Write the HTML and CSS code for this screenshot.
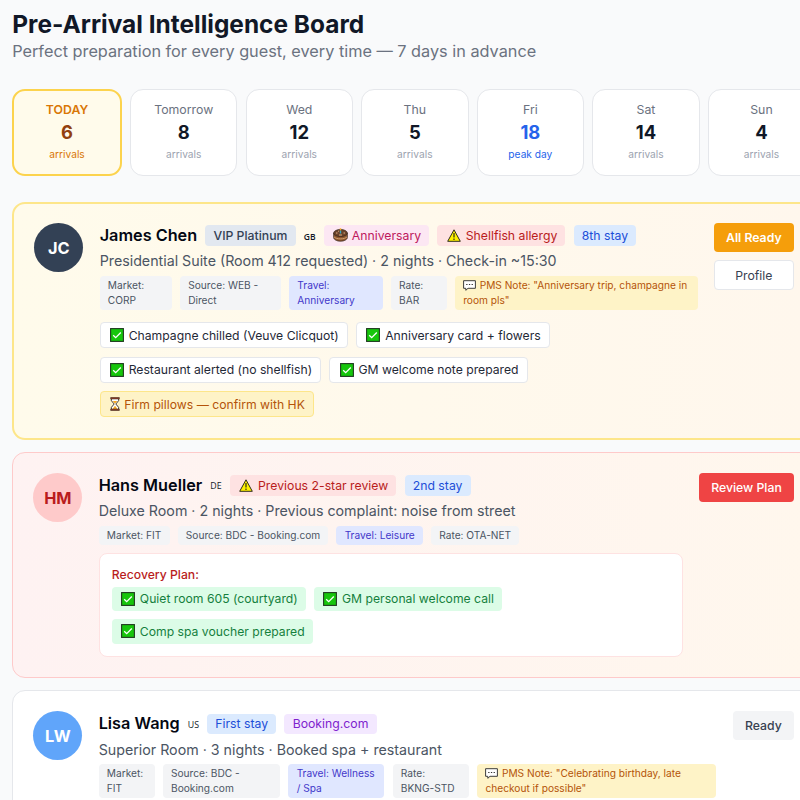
FILE: index.html
```html
<!DOCTYPE html>
<html lang="en">
<head>
<meta charset="utf-8">
<title>Pre-Arrival Intelligence Board</title>
<link rel="stylesheet" href="styles.css">
</head>
<body>
<svg class="defs" width="0" height="0">
  <symbol id="check" viewBox="0 0 14 14"><rect x=".6" y=".6" width="12.8" height="12.8" fill="#16c60c" stroke="#203a20" stroke-width="1.1"/><path d="M3.2 7.2l2.5 2.5 5.1-5.2" fill="none" stroke="#fff" stroke-width="1.3"/></symbol>
  <symbol id="warn" viewBox="0 0 14 13"><path d="M7 .8L13.3 12.3H.7z" fill="#fff100" stroke="#302d1c" stroke-width="1" stroke-linejoin="round"/><path d="M7 4v4.6M7 9.6v1.3" stroke="#302d1c" stroke-width="1.2"/></symbol>
  <symbol id="cake" viewBox="0 0 15 14"><path d="M.7 5v4.5c0 2 3 3.7 6.8 3.7s6.8-1.7 6.8-3.7V5z" fill="#8e562e" stroke="#3b2a20" stroke-width=".8"/><path d="M1 8.8c2 2.8 11 2.8 13 0" fill="none" stroke="#d7a878" stroke-width=".9"/><ellipse cx="7.5" cy="5" rx="6.8" ry="3.5" fill="#6c442c" stroke="#3b2a20" stroke-width=".8"/><path d="M3 5h1.5M10.5 5H12M6 7h3M5 3.2h1" stroke="#e9b98e" stroke-width=".9"/><path d="M7.5 2.5v3" stroke="#31a8c8" stroke-width="1.3"/><path d="M7.5.3v2" stroke="#f7a823" stroke-width="1.5"/></symbol>
  <symbol id="hour" viewBox="0 0 10 14"><path d="M1.4 1.5v2.2L4.2 7l-2.8 3.3v2.2h7.2v-2.2L5.8 7l2.8-3.3V1.5z" fill="#fff" stroke="#33251f" stroke-width=".9"/><path d="M2.7 4h4.6L5 6.8zM5 8.7l2.5 3.3h-5z" fill="#f7a823"/><path d="M.4 1.2h9.2M.4 12.8h9.2" stroke="#33251f" stroke-width="2"/><path d="M.8 1.2h8.4M.8 12.8h8.4" stroke="#b5482b" stroke-width=".8"/></symbol>
  <symbol id="bubble" viewBox="0 0 13 11"><path d="M.6.7h11.8v7.6H5L2.8 10.3v-2H.6z" fill="#fff" stroke="#333" stroke-width=".95"/><path d="M3.2 4.5h1.3M5.9 4.5h1.3M8.6 4.5h1.3" stroke="#333" stroke-width="1.2"/></symbol>
</svg>
<main class="board">
  <header>
    <h1>Pre-Arrival Intelligence Board</h1>
    <p class="subtitle">Perfect preparation for every guest, every time — 7 days in advance</p>
  </header>

  <section class="days">
    <div class="day today"><span class="label">TODAY</span><span class="count">6</span><span class="note">arrivals</span></div>
    <div class="day"><span class="label">Tomorrow</span><span class="count">8</span><span class="note">arrivals</span></div>
    <div class="day"><span class="label">Wed</span><span class="count">12</span><span class="note">arrivals</span></div>
    <div class="day"><span class="label">Thu</span><span class="count">5</span><span class="note">arrivals</span></div>
    <div class="day peak"><span class="label">Fri</span><span class="count">18</span><span class="note">peak day</span></div>
    <div class="day"><span class="label">Sat</span><span class="count">14</span><span class="note">arrivals</span></div>
    <div class="day"><span class="label">Sun</span><span class="count">4</span><span class="note">arrivals</span></div>
  </section>

  <section class="guests">
    <article class="guest vip">
      <div class="avatar">JC</div>
      <div class="info">
        <div class="head"><h2>James Chen</h2><span class="badge slate">VIP Platinum</span><span class="flag bold">GB</span><span class="badge pink"><svg class="i-cake"><use href="#cake"/></svg>Anniversary</span><span class="badge red"><svg class="i-warn"><use href="#warn"/></svg>Shellfish allergy</span><span class="badge blue">8th stay</span></div>
        <p class="stay">Presidential Suite (Room 412 requested) · 2 nights · Check-in ~15:30</p>
        <div class="tags cols-james"><span class="tag">Market: CORP</span><span class="tag">Source: WEB - Direct</span><span class="tag travel">Travel: Anniversary</span><span class="tag">Rate: BAR</span><span class="tag pms"><svg class="i-bubble"><use href="#bubble"/></svg>PMS Note: "Anniversary trip, champagne in room pls"</span></div>
        <div class="tasks">
          <span class="task"><svg class="i-check"><use href="#check"/></svg>Champagne chilled (Veuve Clicquot)</span>
          <span class="task"><svg class="i-check"><use href="#check"/></svg>Anniversary card + flowers</span>
          <span class="task"><svg class="i-check"><use href="#check"/></svg>Restaurant alerted (no shellfish)</span>
          <span class="task"><svg class="i-check"><use href="#check"/></svg>GM welcome note prepared</span>
          <span class="task pending"><svg class="i-hour"><use href="#hour"/></svg>Firm pillows — confirm with HK</span>
        </div>
      </div>
      <div class="actions"><button class="btn amber">All Ready</button><button class="btn outline">Profile</button></div>
    </article>

    <article class="guest risk">
      <div class="avatar">HM</div>
      <div class="info">
        <div class="head"><h2>Hans Mueller</h2><span class="flag">DE</span><span class="badge red"><svg class="i-warn"><use href="#warn"/></svg>Previous 2-star review</span><span class="badge blue">2nd stay</span></div>
        <p class="stay">Deluxe Room · 2 nights · Previous complaint: noise from street</p>
        <div class="tags"><span class="tag">Market: FIT</span><span class="tag">Source: BDC - Booking.com</span><span class="tag travel">Travel: Leisure</span><span class="tag">Rate: OTA-NET</span></div>
        <div class="plan">
          <h3>Recovery Plan:</h3>
          <div class="steps">
            <span class="step"><svg class="i-check"><use href="#check"/></svg>Quiet room 605 (courtyard)</span>
            <span class="step"><svg class="i-check"><use href="#check"/></svg>GM personal welcome call</span>
            <span class="step"><svg class="i-check"><use href="#check"/></svg>Comp spa voucher prepared</span>
          </div>
        </div>
      </div>
      <div class="actions"><button class="btn danger">Review Plan</button></div>
    </article>

    <article class="guest last">
      <div class="avatar">LW</div>
      <div class="info">
        <div class="head"><h2>Lisa Wang</h2><span class="flag">US</span><span class="badge blue">First stay</span><span class="badge purple">Booking.com</span></div>
        <p class="stay">Superior Room · 3 nights · Booked spa + restaurant</p>
        <div class="tags cols-lisa"><span class="tag">Market: FIT</span><span class="tag">Source: BDC - Booking.com</span><span class="tag travel">Travel: Wellness / Spa</span><span class="tag rate">Rate: <span>BKNG-STD</span></span><span class="tag pms"><svg class="i-bubble"><use href="#bubble"/></svg>PMS Note: "Celebrating birthday, late checkout if possible"</span></div>
      </div>
      <div class="actions"><button class="btn plain">Ready</button></div>
    </article>
  </section>
</main>
</body>
</html>
```
FILE: styles.css
```css
* { box-sizing: border-box; }
html, body { height: 800px; overflow: hidden; }
body { margin: 0; background: #f9fafb; color: #030712; font-family: Inter, "Liberation Sans", sans-serif; }
h1, h2, h3, p { margin: 0; }
.defs { display: block; }
.board { width: 827.4px; height: 800px; overflow: hidden; padding: 10px 12.2px 0; }

h1 { font-size: 24.45px; line-height: 29.4px; font-weight: 700; color: #111827; white-space: nowrap; }
.subtitle { font-size: 16.27px; line-height: 25.6px; color: #6b7280; white-space: nowrap; }

.days { display: grid; grid-template-columns: 109.7px repeat(6, 107.4px); gap: 8.17px; margin-top: 23.8px; }
.day { height: 87.6px; padding-top: 10px; display: flex; flex-direction: column; align-items: center; background: #fff; border: 1px solid #e5e7eb; border-radius: 13px; }
.label { font-size: 12.3px; line-height: 19px; color: #6b7280; }
.count { font-size: 18.4px; line-height: 26px; font-weight: 700; color: #111827; }
.note { font-size: 10.2px; line-height: 18px; color: #9ca3af; }
.today { padding-top: 9.4px; background: #fffbeb; border: 2px solid #fcd34d; }
.today .label { color: #d97706; font-weight: 600; }
.today .count { color: #92400e; }
.today .note { color: #d97706; }
.peak .count, .peak .note { color: #2563eb; }

.guests { display: flex; flex-direction: column; gap: 12.3px; margin-top: 25.4px; }
.guest { flex: none; display: flex; align-items: flex-start; gap: 16.3px; padding: 20.2px; background: #fff; border: 1px solid #e5e7eb; border-radius: 13px; height: 226px; }
.vip { height: 237.9px; padding: 19.4px 19.6px 19.4px 20.2px; border: 2px solid #fde68a; background: linear-gradient(90deg, #fffbeb, #fff7ed); }
.risk { border-color: #fecaca; background: linear-gradient(90deg, #fef2f2, #fff7ed); }
.last { height: 130px; }
.avatar { flex: none; width: 49px; height: 49px; border-radius: 50%; display: flex; align-items: center; justify-content: center; font-size: 16.33px; font-weight: 700; color: #fff; background: #60a5fa; }
.vip .avatar { background: #334155; }
.risk .avatar { background: #fecaca; color: #b91c1c; }
.info { flex: 1; min-width: 0; }

.head { display: flex; align-items: center; gap: 8.17px; height: 24.5px; white-space: nowrap; }
h2 { font-size: 16.25px; line-height: 24.5px; font-weight: 600; color: #030712; }
.badge { display: flex; align-items: center; height: 20.4px; padding: 0 8.17px; border-radius: 4px; font-size: 12.25px; }
.slate { background: #e2e8f0; color: #334155; font-weight: 500; }
.pink { background: #fce7f3; color: #be185d; }
.red { background: #fee2e2; color: #b91c1c; }
.blue { background: #dbeafe; color: #1d4ed8; }
.purple { background: #f3e8ff; color: #7e22ce; }
.flag { font-family: "Open Sans", "Noto Sans", sans-serif; font-size: 8.8px; font-weight: 500; color: #111827; padding-top: 2px; }
.flag.bold { font-size: 8.5px; font-weight: 600; }
.stay { font-size: 14.24px; line-height: 22px; margin-top: 2.8px; color: #4b5563; white-space: nowrap; }
.vip .stay { margin-top: 2px; }

.tags { display: flex; gap: 8.17px; margin-top: 3.4px; }
.vip .tags { margin-top: 4px; }
.cols-james { display: grid; grid-template-columns: 72.2px 101px 93.5px 56px 1fr; }
.cols-lisa { display: grid; grid-template-columns: 56px 117.5px 96px 76.5px 1fr; }
.tag { padding: 2.3px 8.17px; border-radius: 4px; background: #f3f4f6; color: #4b5563; font-size: 10.17px; line-height: 14.8px; }
.rate { padding-right: 4px; }
.rate span { white-space: nowrap; }
.travel { background: #e0e7ff; color: #4338ca; }
.pms { background: #fef3c7; color: #b45309; }

.tasks { display: flex; flex-wrap: wrap; gap: 8.17px; margin-top: 12.2px; }
.task, .step { display: flex; align-items: center; height: 26.3px; padding: 0 8.2px; border: 1px solid #e5e7eb; border-radius: 4px; background: #fff; color: #1f2937; font-size: 12.2px; white-space: nowrap; }
.task.pending { background: #fef3c7; border-color: #fde68a; color: #b45309; }
.plan { margin-top: 8px; height: 104px; padding: 11.3px 12.2px; border: 1px solid #fee2e2; border-radius: 8px; background: #fff; }
h3 { font-size: 12.2px; line-height: 18px; font-weight: 500; color: #b91c1c; }
.steps { display: flex; flex-wrap: wrap; gap: 8.17px; margin-top: 3px; }
.step { height: 24.5px; padding: 0 8.17px; border: 0; background: #dcfce7; color: #15803d; }

.actions { flex: none; display: flex; flex-direction: column; gap: 8.2px; }
.btn { height: 28.5px; padding: 0 12.25px; border: 0; border-radius: 4px; font: 500 12.25px Inter, sans-serif; white-space: nowrap; }
.amber { background: #f59e0b; color: #fff; font-weight: 600; padding: 0 12px; }
.outline { height: 30.5px; background: #fff; border: 1px solid #e5e7eb; color: #374151; font-weight: 400; }
.danger { background: #ef4444; color: #fff; }
.plain { background: #f3f4f6; color: #374151; }

svg { flex: none; }
.i-check { width: 14px; height: 14px; margin: 0 4.8px 0 1px; }
.i-warn { width: 14px; height: 13px; margin: 1px 4.8px 0 1.3px; }
.i-cake { width: 15px; height: 14px; margin: 0 4px 0 1px; }
.i-hour { width: 10px; height: 14px; margin: 0 4.5px 0 1px; }
.i-bubble { width: 13px; height: 11px; margin-right: 3.5px; vertical-align: -2px; }
```
